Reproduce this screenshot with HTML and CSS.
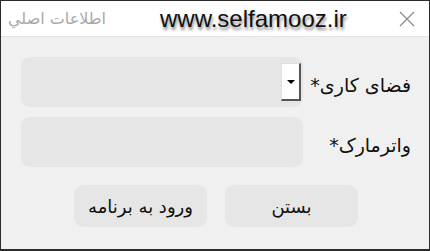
FILE: index.html
```html
<!DOCTYPE html>
<html lang="fa">
<head>
<meta charset="utf-8">
<link rel="stylesheet" href="styles.css">
</head>
<body>
<div class="window">
  <div class="titlebar">
    <span class="title">اطلاعات اصلي</span>
    <span class="watermark">www.selfamooz.ir</span>
    <span class="close">
      <svg width="16" height="16" viewBox="0 0 16 16"><path d="M1 1 L15 15 M15 1 L1 15" stroke="#8a8a8a" stroke-width="1.2" fill="none"/></svg>
    </span>
  </div>
  <div class="body">
    <div class="row">
      <div class="field">
        <span class="dropbtn"><span class="arrow"></span></span>
      </div>
      <span class="label">فضای کاری*</span>
    </div>
    <div class="row">
      <div class="field"></div>
      <span class="label">واترمارک*</span>
    </div>
    <div class="buttons">
      <span class="btn">ورود به برنامه</span>
      <span class="btn">بستن</span>
    </div>
  </div>
</div>
</body>
</html>
```
FILE: styles.css
```css
html, body { margin: 0; padding: 0; background: #f0f0f0; }
.window {
  width: 430px; height: 251px; box-sizing: border-box;
  border: 1px solid #2b2b2b; border-bottom-width: 2px;
  background: #f0f0f0; display: flex; flex-direction: column;
  font-family: "DejaVu Sans", sans-serif;
}
.titlebar {
  height: 36px; box-sizing: border-box; background: #fff;
  border-bottom: 1px solid #e4e4e4;
  display: flex; align-items: center; position: relative;
}
.title {
  color: #a8a8a8; font-size: 16px; margin-left: 9px; width: 96px;
  direction: rtl; text-align: right; white-space: nowrap;
}
.watermark {
  font-family: "Liberation Sans", sans-serif; font-size: 24px; color: #111;
  margin-left: 54px; text-shadow: 1px 3px 3px rgba(0,0,0,0.45);
  margin-top: 1px;
}
.close { margin-left: auto; margin-right: 14px; display: flex; }
.body { flex: 1; padding: 20px 0 0 20px; display: flex; flex-direction: column; }
.row { display: flex; align-items: center; height: 50px; margin-bottom: 10px; }
.field {
  width: 282px; height: 50px; box-sizing: border-box; background: #e6e6e6;
  border-radius: 9px; display: flex; justify-content: flex-end; align-items: center;
  padding-right: 2px;
}
.dropbtn {
  width: 20px; height: 38px; box-sizing: border-box; background: #fff;
  border: 1px solid #e0e0e0; border-right: 2px solid #555; border-bottom: 2px solid #555;
  display: flex; align-items: center; justify-content: center;
}
.arrow {
  width: 0; height: 0; border-left: 4px solid transparent; border-right: 4px solid transparent;
  border-top: 4px solid #000;
}
.label {
  direction: rtl; font-size: 19px; color: #111; margin-left: auto; margin-right: 18px;
  padding-top: 6px;
}
.buttons { display: flex; gap: 18px; margin-left: 53px; margin-top: 8px; }
.btn {
  width: 133px; height: 42px; background: #e6e6e6; border-radius: 9px;
  display: flex; align-items: center; justify-content: center;
  direction: rtl; font-size: 18px; color: #111;
}
```
